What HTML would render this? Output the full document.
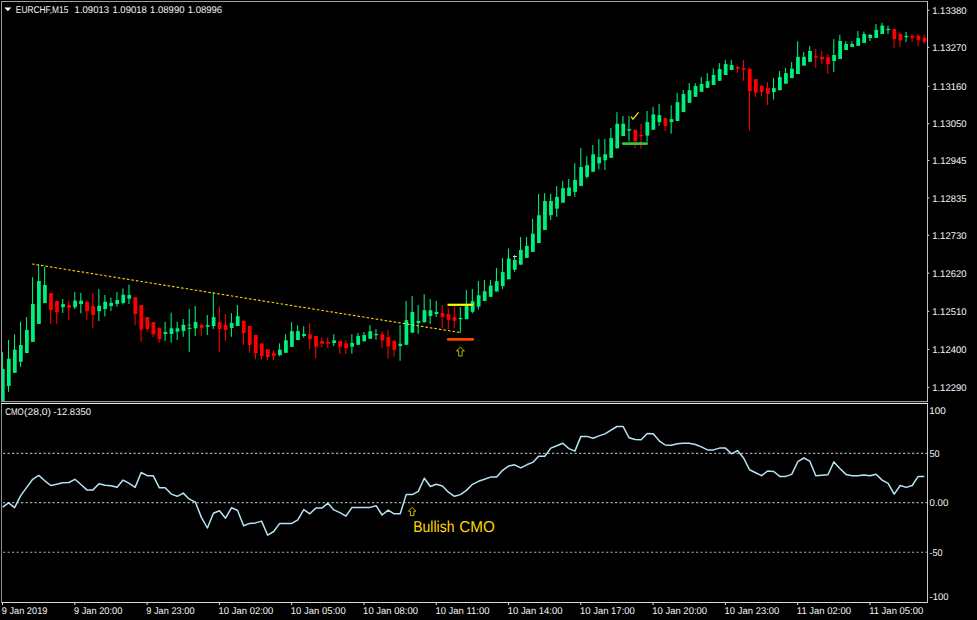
<!DOCTYPE html>
<html><head><meta charset="utf-8"><title>EURCHF,M15</title>
<style>
html,body{margin:0;padding:0;background:#000;}
body{width:977px;height:620px;overflow:hidden;position:relative;font-family:"Liberation Sans",sans-serif;}
svg{position:absolute;left:0;top:0;}
text{font-family:"Liberation Sans",sans-serif;font-size:9.25px;fill:#f4f4f4;}
</style></head><body>
<svg width="977" height="620" viewBox="0 0 977 620">
<rect x="0" y="0" width="977" height="620" fill="#000"/>

<defs><clipPath id="cm"><rect x="2" y="2" width="925" height="399"/></clipPath></defs>
<g id="candles" clip-path="url(#cm)">
<rect x="1.96" y="351.8" width="1.05" height="49.2" fill="#00f07c"/>
<rect x="0.90" y="369.0" width="3.75" height="32.0" fill="#00f07c"/>
<rect x="7.98" y="340.0" width="1.05" height="51.8" fill="#00f07c"/>
<rect x="6.92" y="358.7" width="3.75" height="27.3" fill="#00f07c"/>
<rect x="14.00" y="334.4" width="1.05" height="38.4" fill="#00f07c"/>
<rect x="12.95" y="349.7" width="3.75" height="23.1" fill="#00f07c"/>
<rect x="20.03" y="321.8" width="1.05" height="45.0" fill="#00f07c"/>
<rect x="18.97" y="345.0" width="3.75" height="16.8" fill="#00f07c"/>
<rect x="26.05" y="317.0" width="1.05" height="36.1" fill="#00f07c"/>
<rect x="25.00" y="330.0" width="3.75" height="23.1" fill="#00f07c"/>
<rect x="32.08" y="277.2" width="1.05" height="64.7" fill="#00f07c"/>
<rect x="31.02" y="304.1" width="3.75" height="37.8" fill="#00f07c"/>
<rect x="38.10" y="264.4" width="1.05" height="59.5" fill="#00f07c"/>
<rect x="37.04" y="281.0" width="3.75" height="42.9" fill="#00f07c"/>
<rect x="44.12" y="267.1" width="1.05" height="36.0" fill="#00f07c"/>
<rect x="43.07" y="285.0" width="3.75" height="18.1" fill="#00f07c"/>
<rect x="50.15" y="293.1" width="1.05" height="30.9" fill="#ff0000"/>
<rect x="49.09" y="293.1" width="3.75" height="16.9" fill="#ff0000"/>
<rect x="56.17" y="301.0" width="1.05" height="23.0" fill="#ff0000"/>
<rect x="55.12" y="301.0" width="3.75" height="11.2" fill="#ff0000"/>
<rect x="62.20" y="299.0" width="1.05" height="14.0" fill="#00f07c"/>
<rect x="61.14" y="304.1" width="3.75" height="3.0" fill="#00f07c"/>
<rect x="68.22" y="300.6" width="1.05" height="19.0" fill="#ff0000"/>
<rect x="67.16" y="305.0" width="3.75" height="3.0" fill="#ff0000"/>
<rect x="74.24" y="292.0" width="1.05" height="17.0" fill="#00f07c"/>
<rect x="73.19" y="300.6" width="3.75" height="6.6" fill="#00f07c"/>
<rect x="80.27" y="293.0" width="1.05" height="20.3" fill="#00f07c"/>
<rect x="79.21" y="300.6" width="3.75" height="3.4" fill="#00f07c"/>
<rect x="86.29" y="300.6" width="1.05" height="19.0" fill="#ff0000"/>
<rect x="85.24" y="301.8" width="3.75" height="9.4" fill="#ff0000"/>
<rect x="92.31" y="293.0" width="1.05" height="35.4" fill="#ff0000"/>
<rect x="91.26" y="306.2" width="3.75" height="8.8" fill="#ff0000"/>
<rect x="98.34" y="289.0" width="1.05" height="32.0" fill="#00f07c"/>
<rect x="97.28" y="305.8" width="3.75" height="5.4" fill="#00f07c"/>
<rect x="104.36" y="295.0" width="1.05" height="21.4" fill="#00f07c"/>
<rect x="103.31" y="301.8" width="3.75" height="7.2" fill="#00f07c"/>
<rect x="110.39" y="297.5" width="1.05" height="13.5" fill="#00f07c"/>
<rect x="109.33" y="302.8" width="3.75" height="3.2" fill="#00f07c"/>
<rect x="116.41" y="292.0" width="1.05" height="14.8" fill="#00f07c"/>
<rect x="115.36" y="300.0" width="3.75" height="4.0" fill="#00f07c"/>
<rect x="122.43" y="288.5" width="1.05" height="15.9" fill="#00f07c"/>
<rect x="121.38" y="294.7" width="3.75" height="8.2" fill="#00f07c"/>
<rect x="128.46" y="284.6" width="1.05" height="19.4" fill="#00f07c"/>
<rect x="127.40" y="295.0" width="3.75" height="3.7" fill="#00f07c"/>
<rect x="134.48" y="297.1" width="1.05" height="28.1" fill="#ff0000"/>
<rect x="133.43" y="297.1" width="3.75" height="16.9" fill="#ff0000"/>
<rect x="140.51" y="305.0" width="1.05" height="36.8" fill="#ff0000"/>
<rect x="139.45" y="305.0" width="3.75" height="24.7" fill="#ff0000"/>
<rect x="146.53" y="317.1" width="1.05" height="14.7" fill="#ff0000"/>
<rect x="145.48" y="317.1" width="3.75" height="11.9" fill="#ff0000"/>
<rect x="152.55" y="322.1" width="1.05" height="15.3" fill="#ff0000"/>
<rect x="151.50" y="322.1" width="3.75" height="12.2" fill="#ff0000"/>
<rect x="158.58" y="328.1" width="1.05" height="14.6" fill="#ff0000"/>
<rect x="157.52" y="328.1" width="3.75" height="10.9" fill="#ff0000"/>
<rect x="164.60" y="321.8" width="1.05" height="19.2" fill="#00f07c"/>
<rect x="163.55" y="332.1" width="3.75" height="1.9" fill="#00f07c"/>
<rect x="170.63" y="312.7" width="1.05" height="30.1" fill="#00f07c"/>
<rect x="169.57" y="328.3" width="3.75" height="5.7" fill="#00f07c"/>
<rect x="176.65" y="321.8" width="1.05" height="18.2" fill="#00f07c"/>
<rect x="175.60" y="328.3" width="3.75" height="3.3" fill="#00f07c"/>
<rect x="182.67" y="319.1" width="1.05" height="17.7" fill="#00f07c"/>
<rect x="181.62" y="325.2" width="3.75" height="5.8" fill="#00f07c"/>
<rect x="188.70" y="309.0" width="1.05" height="42.8" fill="#00f07c"/>
<rect x="187.64" y="327.7" width="3.75" height="1.2" fill="#00f07c"/>
<rect x="194.72" y="306.0" width="1.05" height="30.0" fill="#00f07c"/>
<rect x="193.67" y="322.1" width="3.75" height="6.2" fill="#00f07c"/>
<rect x="200.75" y="323.1" width="1.05" height="12.9" fill="#ff0000"/>
<rect x="199.69" y="325.0" width="3.75" height="2.8" fill="#ff0000"/>
<rect x="206.77" y="315.0" width="1.05" height="20.0" fill="#00f07c"/>
<rect x="205.72" y="325.2" width="3.75" height="1.6" fill="#00f07c"/>
<rect x="212.79" y="292.5" width="1.05" height="36.5" fill="#00f07c"/>
<rect x="211.74" y="317.1" width="3.75" height="8.9" fill="#00f07c"/>
<rect x="218.82" y="306.2" width="1.05" height="45.6" fill="#ff0000"/>
<rect x="217.76" y="322.1" width="3.75" height="6.9" fill="#ff0000"/>
<rect x="224.84" y="314.0" width="1.05" height="26.6" fill="#ff0000"/>
<rect x="223.79" y="325.0" width="3.75" height="5.0" fill="#ff0000"/>
<rect x="230.87" y="313.1" width="1.05" height="23.7" fill="#00f07c"/>
<rect x="229.81" y="323.1" width="3.75" height="5.0" fill="#00f07c"/>
<rect x="236.89" y="305.0" width="1.05" height="21.0" fill="#00f07c"/>
<rect x="235.84" y="316.2" width="3.75" height="9.8" fill="#00f07c"/>
<rect x="242.91" y="320.0" width="1.05" height="25.0" fill="#ff0000"/>
<rect x="241.86" y="321.0" width="3.75" height="12.1" fill="#ff0000"/>
<rect x="248.94" y="326.0" width="1.05" height="26.8" fill="#ff0000"/>
<rect x="247.88" y="326.0" width="3.75" height="19.0" fill="#ff0000"/>
<rect x="254.96" y="335.0" width="1.05" height="24.3" fill="#ff0000"/>
<rect x="253.91" y="335.0" width="3.75" height="18.1" fill="#ff0000"/>
<rect x="260.99" y="343.4" width="1.05" height="15.9" fill="#ff0000"/>
<rect x="259.93" y="343.4" width="3.75" height="12.6" fill="#ff0000"/>
<rect x="267.01" y="349.3" width="1.05" height="10.7" fill="#ff0000"/>
<rect x="265.96" y="349.3" width="3.75" height="7.7" fill="#ff0000"/>
<rect x="273.04" y="350.3" width="1.05" height="9.7" fill="#ff0000"/>
<rect x="271.98" y="353.0" width="3.75" height="3.0" fill="#ff0000"/>
<rect x="279.06" y="343.3" width="1.05" height="12.9" fill="#00f07c"/>
<rect x="278.00" y="349.7" width="3.75" height="5.5" fill="#00f07c"/>
<rect x="285.08" y="334.3" width="1.05" height="18.5" fill="#00f07c"/>
<rect x="284.03" y="340.3" width="3.75" height="12.5" fill="#00f07c"/>
<rect x="291.11" y="322.2" width="1.05" height="24.6" fill="#00f07c"/>
<rect x="290.05" y="331.2" width="3.75" height="15.6" fill="#00f07c"/>
<rect x="297.13" y="325.3" width="1.05" height="14.7" fill="#00f07c"/>
<rect x="296.08" y="331.2" width="3.75" height="8.8" fill="#00f07c"/>
<rect x="303.16" y="326.2" width="1.05" height="11.5" fill="#00f07c"/>
<rect x="302.10" y="334.0" width="3.75" height="2.0" fill="#00f07c"/>
<rect x="309.18" y="323.1" width="1.05" height="25.9" fill="#ff0000"/>
<rect x="308.12" y="334.3" width="3.75" height="4.7" fill="#ff0000"/>
<rect x="315.20" y="336.0" width="1.05" height="22.0" fill="#ff0000"/>
<rect x="314.15" y="336.0" width="3.75" height="10.8" fill="#ff0000"/>
<rect x="321.23" y="337.5" width="1.05" height="9.5" fill="#ff0000"/>
<rect x="320.17" y="341.0" width="3.75" height="2.7" fill="#ff0000"/>
<rect x="327.25" y="337.5" width="1.05" height="10.5" fill="#ff0000"/>
<rect x="326.20" y="341.8" width="3.75" height="1.9" fill="#ff0000"/>
<rect x="333.28" y="334.3" width="1.05" height="11.7" fill="#00f07c"/>
<rect x="332.22" y="340.3" width="3.75" height="2.7" fill="#00f07c"/>
<rect x="339.30" y="341.0" width="1.05" height="13.0" fill="#ff0000"/>
<rect x="338.24" y="341.0" width="3.75" height="5.8" fill="#ff0000"/>
<rect x="345.32" y="340.0" width="1.05" height="14.0" fill="#ff0000"/>
<rect x="344.27" y="343.4" width="3.75" height="4.6" fill="#ff0000"/>
<rect x="351.35" y="334.2" width="1.05" height="19.4" fill="#00f07c"/>
<rect x="350.29" y="343.0" width="3.75" height="3.7" fill="#00f07c"/>
<rect x="357.37" y="333.0" width="1.05" height="11.8" fill="#00f07c"/>
<rect x="356.32" y="336.1" width="3.75" height="8.7" fill="#00f07c"/>
<rect x="363.40" y="332.0" width="1.05" height="9.3" fill="#00f07c"/>
<rect x="362.34" y="335.1" width="3.75" height="6.2" fill="#00f07c"/>
<rect x="369.42" y="325.2" width="1.05" height="13.6" fill="#00f07c"/>
<rect x="368.36" y="331.3" width="3.75" height="7.5" fill="#00f07c"/>
<rect x="375.44" y="329.0" width="1.05" height="10.8" fill="#00f07c"/>
<rect x="374.39" y="334.0" width="3.75" height="1.2" fill="#00f07c"/>
<rect x="381.47" y="331.5" width="1.05" height="16.2" fill="#ff0000"/>
<rect x="380.41" y="334.2" width="3.75" height="6.2" fill="#ff0000"/>
<rect x="387.49" y="330.0" width="1.05" height="28.6" fill="#ff0000"/>
<rect x="386.44" y="337.0" width="3.75" height="9.4" fill="#ff0000"/>
<rect x="393.52" y="339.8" width="1.05" height="16.9" fill="#ff0000"/>
<rect x="392.46" y="341.0" width="3.75" height="8.8" fill="#ff0000"/>
<rect x="399.54" y="325.0" width="1.05" height="35.8" fill="#00f07c"/>
<rect x="398.48" y="343.8" width="3.75" height="2.2" fill="#00f07c"/>
<rect x="405.56" y="301.0" width="1.05" height="43.8" fill="#00f07c"/>
<rect x="404.51" y="320.2" width="3.75" height="24.6" fill="#00f07c"/>
<rect x="411.59" y="296.0" width="1.05" height="36.7" fill="#00f07c"/>
<rect x="410.53" y="312.0" width="3.75" height="20.7" fill="#00f07c"/>
<rect x="417.61" y="305.0" width="1.05" height="28.8" fill="#00f07c"/>
<rect x="416.56" y="321.0" width="3.75" height="2.0" fill="#00f07c"/>
<rect x="423.64" y="294.2" width="1.05" height="28.1" fill="#00f07c"/>
<rect x="422.58" y="310.2" width="3.75" height="12.1" fill="#00f07c"/>
<rect x="429.66" y="299.0" width="1.05" height="25.0" fill="#00f07c"/>
<rect x="428.60" y="310.2" width="3.75" height="5.8" fill="#00f07c"/>
<rect x="435.68" y="301.0" width="1.05" height="16.0" fill="#00f07c"/>
<rect x="434.63" y="312.0" width="3.75" height="2.0" fill="#00f07c"/>
<rect x="441.71" y="305.0" width="1.05" height="23.0" fill="#ff0000"/>
<rect x="440.65" y="313.0" width="3.75" height="4.0" fill="#ff0000"/>
<rect x="447.73" y="308.0" width="1.05" height="21.0" fill="#ff0000"/>
<rect x="446.68" y="314.0" width="3.75" height="5.8" fill="#ff0000"/>
<rect x="453.76" y="306.0" width="1.05" height="22.2" fill="#ff0000"/>
<rect x="452.70" y="317.0" width="3.75" height="3.8" fill="#ff0000"/>
<rect x="459.78" y="307.0" width="1.05" height="26.0" fill="#00f07c"/>
<rect x="458.72" y="318.0" width="3.75" height="1.2" fill="#00f07c"/>
<rect x="465.80" y="290.0" width="1.05" height="29.2" fill="#00f07c"/>
<rect x="464.75" y="306.0" width="3.75" height="13.2" fill="#00f07c"/>
<rect x="471.83" y="289.0" width="1.05" height="24.4" fill="#00f07c"/>
<rect x="470.77" y="301.2" width="3.75" height="10.6" fill="#00f07c"/>
<rect x="477.85" y="281.0" width="1.05" height="28.7" fill="#00f07c"/>
<rect x="476.80" y="295.3" width="3.75" height="11.3" fill="#00f07c"/>
<rect x="483.88" y="280.0" width="1.05" height="21.0" fill="#00f07c"/>
<rect x="482.82" y="291.2" width="3.75" height="9.8" fill="#00f07c"/>
<rect x="489.90" y="280.0" width="1.05" height="16.8" fill="#00f07c"/>
<rect x="488.84" y="285.6" width="3.75" height="11.2" fill="#00f07c"/>
<rect x="495.92" y="267.9" width="1.05" height="23.6" fill="#00f07c"/>
<rect x="494.87" y="281.2" width="3.75" height="10.3" fill="#00f07c"/>
<rect x="501.95" y="258.1" width="1.05" height="30.9" fill="#00f07c"/>
<rect x="500.89" y="272.1" width="3.75" height="13.9" fill="#00f07c"/>
<rect x="507.97" y="248.5" width="1.05" height="30.8" fill="#00f07c"/>
<rect x="506.92" y="258.5" width="3.75" height="20.8" fill="#00f07c"/>
<rect x="514.00" y="255.0" width="1.05" height="16.8" fill="#00f07c"/>
<rect x="512.94" y="260.0" width="3.75" height="9.7" fill="#00f07c"/>
<rect x="520.02" y="237.1" width="1.05" height="27.6" fill="#00f07c"/>
<rect x="518.96" y="249.9" width="3.75" height="14.8" fill="#00f07c"/>
<rect x="526.04" y="237.1" width="1.05" height="20.8" fill="#00f07c"/>
<rect x="524.99" y="245.9" width="3.75" height="12.0" fill="#00f07c"/>
<rect x="532.07" y="219.0" width="1.05" height="32.9" fill="#00f07c"/>
<rect x="531.01" y="233.7" width="3.75" height="18.2" fill="#00f07c"/>
<rect x="538.09" y="194.0" width="1.05" height="49.1" fill="#00f07c"/>
<rect x="537.04" y="215.2" width="3.75" height="27.9" fill="#00f07c"/>
<rect x="544.12" y="193.1" width="1.05" height="36.9" fill="#00f07c"/>
<rect x="543.06" y="201.0" width="3.75" height="29.0" fill="#00f07c"/>
<rect x="550.14" y="193.7" width="1.05" height="26.3" fill="#00f07c"/>
<rect x="549.08" y="201.0" width="3.75" height="14.2" fill="#00f07c"/>
<rect x="556.16" y="186.0" width="1.05" height="30.8" fill="#00f07c"/>
<rect x="555.11" y="196.9" width="3.75" height="11.8" fill="#00f07c"/>
<rect x="562.19" y="181.0" width="1.05" height="21.7" fill="#00f07c"/>
<rect x="561.13" y="188.1" width="3.75" height="14.6" fill="#00f07c"/>
<rect x="568.21" y="179.0" width="1.05" height="16.9" fill="#00f07c"/>
<rect x="567.16" y="187.5" width="3.75" height="8.4" fill="#00f07c"/>
<rect x="574.24" y="163.1" width="1.05" height="33.8" fill="#00f07c"/>
<rect x="573.18" y="180.0" width="3.75" height="11.9" fill="#00f07c"/>
<rect x="580.26" y="148.1" width="1.05" height="37.8" fill="#00f07c"/>
<rect x="579.20" y="167.1" width="3.75" height="18.8" fill="#00f07c"/>
<rect x="586.28" y="156.2" width="1.05" height="22.5" fill="#00f07c"/>
<rect x="585.23" y="165.2" width="3.75" height="11.6" fill="#00f07c"/>
<rect x="592.31" y="145.0" width="1.05" height="26.8" fill="#00f07c"/>
<rect x="591.25" y="154.3" width="3.75" height="17.5" fill="#00f07c"/>
<rect x="598.33" y="139.0" width="1.05" height="30.3" fill="#00f07c"/>
<rect x="597.28" y="157.1" width="3.75" height="6.2" fill="#00f07c"/>
<rect x="604.36" y="139.0" width="1.05" height="31.0" fill="#00f07c"/>
<rect x="603.30" y="154.3" width="3.75" height="5.9" fill="#00f07c"/>
<rect x="610.38" y="128.1" width="1.05" height="29.7" fill="#00f07c"/>
<rect x="609.32" y="138.1" width="3.75" height="19.7" fill="#00f07c"/>
<rect x="616.40" y="112.2" width="1.05" height="36.1" fill="#00f07c"/>
<rect x="615.35" y="123.7" width="3.75" height="24.6" fill="#00f07c"/>
<rect x="622.43" y="116.0" width="1.05" height="20.0" fill="#00f07c"/>
<rect x="621.37" y="123.7" width="3.75" height="12.3" fill="#00f07c"/>
<rect x="628.45" y="116.0" width="1.05" height="25.2" fill="#00f07c"/>
<rect x="627.40" y="129.1" width="3.75" height="1.5" fill="#00f07c"/>
<rect x="634.48" y="129.7" width="1.05" height="18.4" fill="#ff0000"/>
<rect x="633.42" y="129.7" width="3.75" height="11.5" fill="#ff0000"/>
<rect x="640.50" y="123.7" width="1.05" height="25.0" fill="#ff0000"/>
<rect x="639.44" y="135.0" width="3.75" height="1.2" fill="#ff0000"/>
<rect x="646.52" y="111.0" width="1.05" height="30.8" fill="#00f07c"/>
<rect x="645.47" y="122.1" width="3.75" height="13.5" fill="#00f07c"/>
<rect x="652.55" y="106.9" width="1.05" height="22.8" fill="#00f07c"/>
<rect x="651.49" y="114.4" width="3.75" height="15.3" fill="#00f07c"/>
<rect x="658.57" y="104.1" width="1.05" height="21.7" fill="#00f07c"/>
<rect x="657.52" y="115.2" width="3.75" height="6.9" fill="#00f07c"/>
<rect x="664.60" y="118.2" width="1.05" height="12.8" fill="#ff0000"/>
<rect x="663.54" y="118.2" width="3.75" height="7.7" fill="#ff0000"/>
<rect x="670.62" y="105.3" width="1.05" height="28.4" fill="#00f07c"/>
<rect x="669.56" y="119.1" width="3.75" height="3.0" fill="#00f07c"/>
<rect x="676.64" y="93.1" width="1.05" height="27.9" fill="#00f07c"/>
<rect x="675.59" y="102.2" width="3.75" height="18.8" fill="#00f07c"/>
<rect x="682.67" y="90.0" width="1.05" height="22.1" fill="#00f07c"/>
<rect x="681.61" y="94.1" width="3.75" height="18.0" fill="#00f07c"/>
<rect x="688.69" y="83.1" width="1.05" height="19.7" fill="#00f07c"/>
<rect x="687.64" y="90.2" width="3.75" height="12.6" fill="#00f07c"/>
<rect x="694.72" y="83.1" width="1.05" height="13.7" fill="#00f07c"/>
<rect x="693.66" y="86.0" width="3.75" height="10.8" fill="#00f07c"/>
<rect x="700.74" y="77.1" width="1.05" height="14.7" fill="#00f07c"/>
<rect x="699.68" y="84.0" width="3.75" height="7.8" fill="#00f07c"/>
<rect x="706.76" y="73.1" width="1.05" height="14.7" fill="#00f07c"/>
<rect x="705.71" y="81.2" width="3.75" height="6.6" fill="#00f07c"/>
<rect x="712.79" y="68.5" width="1.05" height="16.5" fill="#00f07c"/>
<rect x="711.73" y="75.0" width="3.75" height="10.0" fill="#00f07c"/>
<rect x="718.81" y="63.1" width="1.05" height="17.7" fill="#00f07c"/>
<rect x="717.76" y="69.1" width="3.75" height="11.7" fill="#00f07c"/>
<rect x="724.84" y="60.0" width="1.05" height="15.0" fill="#00f07c"/>
<rect x="723.78" y="64.1" width="3.75" height="10.9" fill="#00f07c"/>
<rect x="730.86" y="60.0" width="1.05" height="10.0" fill="#00f07c"/>
<rect x="729.80" y="65.0" width="3.75" height="5.0" fill="#00f07c"/>
<rect x="736.88" y="66.0" width="1.05" height="6.9" fill="#ff0000"/>
<rect x="735.83" y="67.1" width="3.75" height="1.6" fill="#ff0000"/>
<rect x="742.91" y="60.0" width="1.05" height="20.8" fill="#ff0000"/>
<rect x="741.85" y="68.1" width="3.75" height="1.6" fill="#ff0000"/>
<rect x="748.93" y="68.7" width="1.05" height="61.6" fill="#ff0000"/>
<rect x="747.88" y="68.7" width="3.75" height="22.3" fill="#ff0000"/>
<rect x="754.96" y="79.1" width="1.05" height="18.0" fill="#ff0000"/>
<rect x="753.90" y="79.1" width="3.75" height="13.7" fill="#ff0000"/>
<rect x="760.98" y="85.0" width="1.05" height="11.5" fill="#ff0000"/>
<rect x="759.92" y="86.0" width="3.75" height="5.8" fill="#ff0000"/>
<rect x="767.00" y="82.1" width="1.05" height="22.9" fill="#ff0000"/>
<rect x="765.95" y="88.1" width="3.75" height="5.9" fill="#ff0000"/>
<rect x="773.03" y="78.1" width="1.05" height="21.5" fill="#00f07c"/>
<rect x="771.97" y="88.1" width="3.75" height="3.9" fill="#00f07c"/>
<rect x="779.05" y="71.0" width="1.05" height="19.2" fill="#00f07c"/>
<rect x="778.00" y="77.1" width="3.75" height="13.1" fill="#00f07c"/>
<rect x="785.08" y="68.1" width="1.05" height="15.6" fill="#00f07c"/>
<rect x="784.02" y="73.1" width="3.75" height="10.6" fill="#00f07c"/>
<rect x="791.10" y="62.1" width="1.05" height="16.0" fill="#00f07c"/>
<rect x="790.04" y="68.7" width="3.75" height="9.4" fill="#00f07c"/>
<rect x="797.12" y="41.2" width="1.05" height="32.8" fill="#00f07c"/>
<rect x="796.07" y="56.8" width="3.75" height="17.2" fill="#00f07c"/>
<rect x="803.15" y="52.1" width="1.05" height="13.5" fill="#00f07c"/>
<rect x="802.09" y="56.8" width="3.75" height="8.8" fill="#00f07c"/>
<rect x="809.17" y="46.0" width="1.05" height="15.8" fill="#00f07c"/>
<rect x="808.12" y="51.0" width="3.75" height="10.8" fill="#00f07c"/>
<rect x="815.20" y="49.1" width="1.05" height="18.7" fill="#ff0000"/>
<rect x="814.14" y="56.2" width="3.75" height="1.5" fill="#ff0000"/>
<rect x="821.22" y="51.0" width="1.05" height="13.0" fill="#ff0000"/>
<rect x="820.16" y="56.8" width="3.75" height="2.5" fill="#ff0000"/>
<rect x="827.24" y="54.0" width="1.05" height="20.0" fill="#ff0000"/>
<rect x="826.19" y="57.2" width="3.75" height="6.8" fill="#ff0000"/>
<rect x="833.27" y="39.1" width="1.05" height="33.0" fill="#00f07c"/>
<rect x="832.21" y="55.0" width="3.75" height="6.0" fill="#00f07c"/>
<rect x="839.29" y="34.7" width="1.05" height="24.3" fill="#00f07c"/>
<rect x="838.24" y="41.0" width="3.75" height="18.0" fill="#00f07c"/>
<rect x="845.32" y="41.2" width="1.05" height="8.8" fill="#00f07c"/>
<rect x="844.26" y="44.0" width="3.75" height="6.0" fill="#00f07c"/>
<rect x="851.34" y="41.2" width="1.05" height="5.7" fill="#00f07c"/>
<rect x="850.28" y="44.0" width="3.75" height="2.9" fill="#00f07c"/>
<rect x="857.36" y="31.0" width="1.05" height="14.9" fill="#00f07c"/>
<rect x="856.31" y="38.1" width="3.75" height="7.8" fill="#00f07c"/>
<rect x="863.39" y="31.5" width="1.05" height="11.4" fill="#00f07c"/>
<rect x="862.33" y="34.1" width="3.75" height="8.8" fill="#00f07c"/>
<rect x="869.41" y="33.8" width="1.05" height="7.2" fill="#00f07c"/>
<rect x="868.36" y="35.0" width="3.75" height="3.1" fill="#00f07c"/>
<rect x="875.44" y="24.0" width="1.05" height="13.9" fill="#00f07c"/>
<rect x="874.38" y="29.9" width="3.75" height="8.0" fill="#00f07c"/>
<rect x="881.46" y="22.7" width="1.05" height="11.3" fill="#00f07c"/>
<rect x="880.40" y="25.6" width="3.75" height="8.4" fill="#00f07c"/>
<rect x="887.48" y="25.8" width="1.05" height="8.2" fill="#00f07c"/>
<rect x="886.43" y="28.9" width="3.75" height="1.2" fill="#00f07c"/>
<rect x="893.51" y="29.1" width="1.05" height="18.8" fill="#ff0000"/>
<rect x="892.45" y="29.1" width="3.75" height="10.0" fill="#ff0000"/>
<rect x="899.53" y="31.6" width="1.05" height="15.4" fill="#ff0000"/>
<rect x="898.48" y="34.0" width="3.75" height="6.2" fill="#ff0000"/>
<rect x="905.56" y="31.9" width="1.05" height="10.2" fill="#00f07c"/>
<rect x="904.50" y="35.9" width="3.75" height="1.2" fill="#00f07c"/>
<rect x="911.58" y="34.0" width="1.05" height="7.8" fill="#ff0000"/>
<rect x="910.52" y="35.9" width="3.75" height="1.9" fill="#ff0000"/>
<rect x="917.60" y="34.0" width="1.05" height="12.1" fill="#ff0000"/>
<rect x="916.55" y="35.9" width="3.75" height="4.3" fill="#ff0000"/>
<rect x="923.63" y="34.8" width="1.05" height="9.2" fill="#ff0000"/>
<rect x="922.57" y="37.8" width="3.75" height="4.0" fill="#ff0000"/>
</g>
<line x1="32.2" y1="264" x2="459.3" y2="332.4" stroke="#ffd400" stroke-width="1.1" stroke-dasharray="2.6 1.98" stroke-dashoffset="0.34"/>
<line x1="447.5" y1="304.8" x2="473.3" y2="304.8" stroke="#ffff00" stroke-width="2.2"/>
<line x1="448.2" y1="339.4" x2="472.8" y2="339.4" stroke="#ff4500" stroke-width="2.6" stroke-linecap="round"/>
<line x1="623.2" y1="143.6" x2="646.8" y2="143.6" stroke="#32c832" stroke-width="2.6" stroke-linecap="round"/>
<line x1="513" y1="256.5" x2="516.8" y2="256.5" stroke="#e0e0e0" stroke-width="1"/>
<g fill="#e8a8c8" opacity="0.55"><rect x="181" y="324.7" width="4" height="0.9"/><rect x="187" y="324.6" width="4.2" height="0.9"/><rect x="868.2" y="34.9" width="3.8" height="0.8"/></g>
<polygon points="460.4,347.2 464.4,350.9 462.1,350.9 462.1,356.0 458.7,356.0 458.7,350.9 456.4,350.9" fill="none" stroke="#ccc800" stroke-width="0.9" stroke-linejoin="miter"/>
<polygon points="412.2,507.4 415.9,511.2 413.9,511.2 413.9,515.6 410.4,515.6 410.4,511.2 408.5,511.2" fill="none" stroke="#e6d000" stroke-width="0.9" stroke-linejoin="miter"/>
<polyline points="631,116.6 633,119.2 638.6,112.3" fill="none" stroke="#ffd700" stroke-width="1.3"/>
<g shape-rendering="crispEdges">
<rect x="1" y="1" width="927" height="1" fill="#a0a0a0"/>
<rect x="1" y="1" width="1" height="401" fill="#989898"/>
<rect x="1" y="401" width="927" height="1" fill="#9c9c9c"/>
<rect x="927" y="1" width="1" height="401" fill="#c0c0c0"/>
<rect x="1" y="402" width="927" height="1" fill="#1c1c1c"/>
<rect x="1" y="403" width="927" height="1" fill="#e8e8e8"/>
<rect x="1" y="404" width="1" height="199" fill="#909090"/>
<rect x="927" y="404" width="1" height="199" fill="#c8c8c8"/>
<rect x="2" y="602" width="926" height="1" fill="#d8d8d8"/>
</g>
<line x1="3.0" y1="453.4" x2="927" y2="453.4" stroke="#a8a8a8" stroke-width="1.1" stroke-dasharray="2.25 2.25"/>
<line x1="3.0" y1="502.6" x2="927" y2="502.6" stroke="#a8a8a8" stroke-width="1.1" stroke-dasharray="2.25 2.25"/>
<line x1="3.0" y1="552.2" x2="927" y2="552.2" stroke="#a8a8a8" stroke-width="1.1" stroke-dasharray="2.25 2.25"/>
<polyline points="2.6,507.1 8.6,502.9 14.6,507.6 20.7,495.6 26.7,487.4 32.7,479.3 38.7,475.4 44.8,480.8 50.8,485.5 56.8,484.3 62.8,482.8 68.9,482.5 74.9,479.3 80.9,484.5 86.9,489.9 93.0,489.9 99.0,483.8 105.0,485.2 111.0,485.7 117.1,487.2 123.1,480.1 129.1,483.3 135.1,487.4 141.2,472.5 147.2,475.7 153.2,475.7 159.2,487.7 165.2,487.7 171.3,494.1 177.3,496.3 183.3,493.1 189.3,499.2 195.4,502.2 201.4,517.4 207.4,528.0 213.4,513.2 219.5,510.8 225.5,518.2 231.5,507.8 237.5,510.3 243.6,525.8 249.6,523.4 255.6,522.9 261.6,521.1 267.7,535.2 273.7,531.5 279.7,523.4 285.7,523.4 291.8,523.4 297.8,519.9 303.8,509.6 309.8,513.8 315.8,508.1 321.9,508.1 327.9,503.2 333.9,509.9 339.9,512.6 346.0,516.2 352.0,507.4 358.0,507.4 364.0,507.4 370.1,507.4 376.1,505.7 382.1,515.0 388.1,510.1 394.2,513.8 400.2,513.8 406.2,494.6 412.2,494.6 418.3,491.4 424.3,478.2 430.3,486.5 436.3,484.3 442.4,486.0 448.4,492.2 454.4,496.3 460.4,494.6 466.4,490.4 472.5,484.3 478.5,481.3 484.5,479.3 490.5,477.1 496.6,477.1 502.6,470.3 508.6,466.1 514.6,464.8 520.7,467.8 526.7,464.8 532.7,462.4 538.7,456.2 544.8,456.2 550.8,448.1 556.8,445.7 562.8,443.2 568.9,448.6 574.9,451.1 580.9,436.4 586.9,436.4 593.0,438.3 599.0,435.9 605.0,433.9 611.0,430.2 617.0,426.5 623.1,426.5 629.1,437.8 635.1,439.5 641.1,439.8 647.2,433.4 653.2,433.7 659.2,440.8 665.2,445.0 671.3,445.2 677.3,443.7 683.3,443.2 689.3,443.2 695.4,444.5 701.4,446.9 707.4,449.9 713.4,449.9 719.5,448.1 725.5,448.1 731.5,453.8 737.5,450.6 743.6,458.0 749.6,469.8 755.6,472.7 761.6,475.7 767.6,471.0 773.7,471.5 779.7,476.4 785.7,476.4 791.7,474.4 797.8,461.7 803.8,458.0 809.8,461.2 815.8,475.7 821.9,475.2 827.9,474.7 833.9,461.9 839.9,468.5 846.0,474.4 852.0,475.7 858.0,475.7 864.0,474.9 870.1,475.7 876.1,474.2 882.1,480.1 888.1,483.3 894.2,494.1 900.2,485.5 906.2,487.4 912.2,485.5 918.2,476.4 924.3,476.4" fill="none" stroke="#b6e4f3" stroke-width="1.5" stroke-linejoin="round"/>
<rect x="928" y="9.8" width="1.3" height="1" fill="#e0e0e0"/>
<text transform="translate(932.19,13.90) scale(0.9708,1) skewX(0.2)" style="font-size:9.8px">1.13380</text>
<rect x="928" y="46.8" width="1.3" height="1" fill="#e0e0e0"/>
<text transform="translate(932.19,50.90) scale(0.9708,1) skewX(0.2)" style="font-size:9.8px">1.13270</text>
<rect x="928" y="85.8" width="1.3" height="1" fill="#e0e0e0"/>
<text transform="translate(932.19,89.90) scale(0.9708,1) skewX(0.2)" style="font-size:9.8px">1.13160</text>
<rect x="928" y="123.2" width="1.3" height="1" fill="#e0e0e0"/>
<text transform="translate(932.19,127.30) scale(0.9708,1) skewX(0.2)" style="font-size:9.8px">1.13050</text>
<rect x="928" y="160.0" width="1.3" height="1" fill="#e0e0e0"/>
<text transform="translate(932.19,164.10) scale(0.9715,1) skewX(0.2)" style="font-size:9.8px">1.12945</text>
<rect x="928" y="197.4" width="1.3" height="1" fill="#e0e0e0"/>
<text transform="translate(932.19,201.50) scale(0.9715,1) skewX(0.2)" style="font-size:9.8px">1.12835</text>
<rect x="928" y="234.7" width="1.3" height="1" fill="#e0e0e0"/>
<text transform="translate(932.19,238.80) scale(0.9708,1) skewX(0.2)" style="font-size:9.8px">1.12730</text>
<rect x="928" y="272.6" width="1.3" height="1" fill="#e0e0e0"/>
<text transform="translate(932.19,276.70) scale(0.9708,1) skewX(0.2)" style="font-size:9.8px">1.12620</text>
<rect x="928" y="310.8" width="1.3" height="1" fill="#e0e0e0"/>
<text transform="translate(932.19,314.90) scale(0.9708,1) skewX(0.2)" style="font-size:9.8px">1.12510</text>
<rect x="928" y="349.0" width="1.3" height="1" fill="#e0e0e0"/>
<text transform="translate(932.19,353.10) scale(0.9708,1) skewX(0.2)" style="font-size:9.8px">1.12400</text>
<rect x="928" y="386.9" width="1.3" height="1" fill="#e0e0e0"/>
<text transform="translate(932.19,391.00) scale(0.9708,1) skewX(0.2)" style="font-size:9.8px">1.12290</text>
<text transform="translate(929.15,413.60) scale(1.0171,1) skewX(0.2)" style="font-size:9.8px">100</text>
<text transform="translate(929.54,457.20) scale(0.9290,1) skewX(0.2)" style="font-size:9.8px">50</text>
<text transform="translate(929.51,506.10) scale(0.9890,1) skewX(0.2)" style="font-size:9.8px">0.00</text>
<text transform="translate(929.49,556.00) scale(0.9287,1) skewX(0.2)" style="font-size:9.8px">-50</text>
<text transform="translate(929.47,599.70) scale(0.9685,1) skewX(0.2)" style="font-size:9.8px">-100</text>
<rect x="2.00" y="603" width="1" height="2" fill="#e8e8e8"/>
<text transform="translate(1.70,614.10) scale(0.9439,1) skewX(0.2)" style="font-size:9.8px">9&#160;Jan&#160;2019</text>
<rect x="74.29" y="603" width="1" height="2" fill="#e8e8e8"/>
<text transform="translate(73.99,614.10) scale(0.9439,1) skewX(0.2)" style="font-size:9.8px">9&#160;Jan&#160;20:00</text>
<rect x="146.58" y="603" width="1" height="2" fill="#e8e8e8"/>
<text transform="translate(146.28,614.10) scale(0.9439,1) skewX(0.2)" style="font-size:9.8px">9&#160;Jan&#160;23:00</text>
<rect x="218.86" y="603" width="1" height="2" fill="#e8e8e8"/>
<text transform="translate(218.55,614.10) scale(0.9675,1) skewX(0.2)" style="font-size:9.8px">10&#160;Jan&#160;02:00</text>
<rect x="291.15" y="603" width="1" height="2" fill="#e8e8e8"/>
<text transform="translate(290.83,614.10) scale(0.9675,1) skewX(0.2)" style="font-size:9.8px">10&#160;Jan&#160;05:00</text>
<rect x="363.44" y="603" width="1" height="2" fill="#e8e8e8"/>
<text transform="translate(363.12,614.10) scale(0.9675,1) skewX(0.2)" style="font-size:9.8px">10&#160;Jan&#160;08:00</text>
<rect x="435.73" y="603" width="1" height="2" fill="#e8e8e8"/>
<text transform="translate(435.41,614.10) scale(0.9675,1) skewX(0.2)" style="font-size:9.8px">10&#160;Jan&#160;11:00</text>
<rect x="508.02" y="603" width="1" height="2" fill="#e8e8e8"/>
<text transform="translate(507.70,614.10) scale(0.9675,1) skewX(0.2)" style="font-size:9.8px">10&#160;Jan&#160;14:00</text>
<rect x="580.30" y="603" width="1" height="2" fill="#e8e8e8"/>
<text transform="translate(579.99,614.10) scale(0.9675,1) skewX(0.2)" style="font-size:9.8px">10&#160;Jan&#160;17:00</text>
<rect x="652.59" y="603" width="1" height="2" fill="#e8e8e8"/>
<text transform="translate(652.27,614.10) scale(0.9675,1) skewX(0.2)" style="font-size:9.8px">10&#160;Jan&#160;20:00</text>
<rect x="724.88" y="603" width="1" height="2" fill="#e8e8e8"/>
<text transform="translate(724.56,614.10) scale(0.9675,1) skewX(0.2)" style="font-size:9.8px">10&#160;Jan&#160;23:00</text>
<rect x="797.17" y="603" width="1" height="2" fill="#e8e8e8"/>
<text transform="translate(796.85,614.10) scale(0.9675,1) skewX(0.2)" style="font-size:9.8px">11&#160;Jan&#160;02:00</text>
<rect x="869.46" y="603" width="1" height="2" fill="#e8e8e8"/>
<text transform="translate(869.14,614.10) scale(0.9675,1) skewX(0.2)" style="font-size:9.8px">11&#160;Jan&#160;05:00</text>
<polygon points="4.4,7.4 11.3,7.4 7.85,11.2" fill="#fff"/>
<text transform="translate(15.81,12.95) scale(0.8555,1) skewX(0.2)" style="font-size:9.8px">EURCHF,M15</text>
<text transform="translate(74.58,12.95) scale(0.9752,1) skewX(0.2)" style="font-size:9.8px">1.09013</text>
<text transform="translate(112.38,12.95) scale(0.9752,1) skewX(0.2)" style="font-size:9.8px">1.09018</text>
<text transform="translate(150.08,12.95) scale(0.9738,1) skewX(0.2)" style="font-size:9.8px">1.08990</text>
<text transform="translate(187.68,12.95) scale(0.9752,1) skewX(0.2)" style="font-size:9.8px">1.08996</text>
<text transform="translate(5.20,415.10) scale(0.8081,1) skewX(0.2)" style="font-size:9.8px">CMO</text>
<text transform="translate(23.95,415.10) scale(1.0584,1) skewX(0.2)" style="font-size:9.8px">(28,0)</text>
<text transform="translate(53.57,415.10) scale(0.9663,1) skewX(0.2)" style="font-size:9.8px">-12.8350</text>
<text transform="translate(413.24,531.70) scale(0.8869,1) skewX(0.2)" style="font-size:15.8px;fill:#ffd900">Bullish</text>
<text transform="translate(459.24,531.70) scale(0.9657,1) skewX(0.2)" style="font-size:15.8px;fill:#ffd900">CMO</text>
</svg></body></html>
